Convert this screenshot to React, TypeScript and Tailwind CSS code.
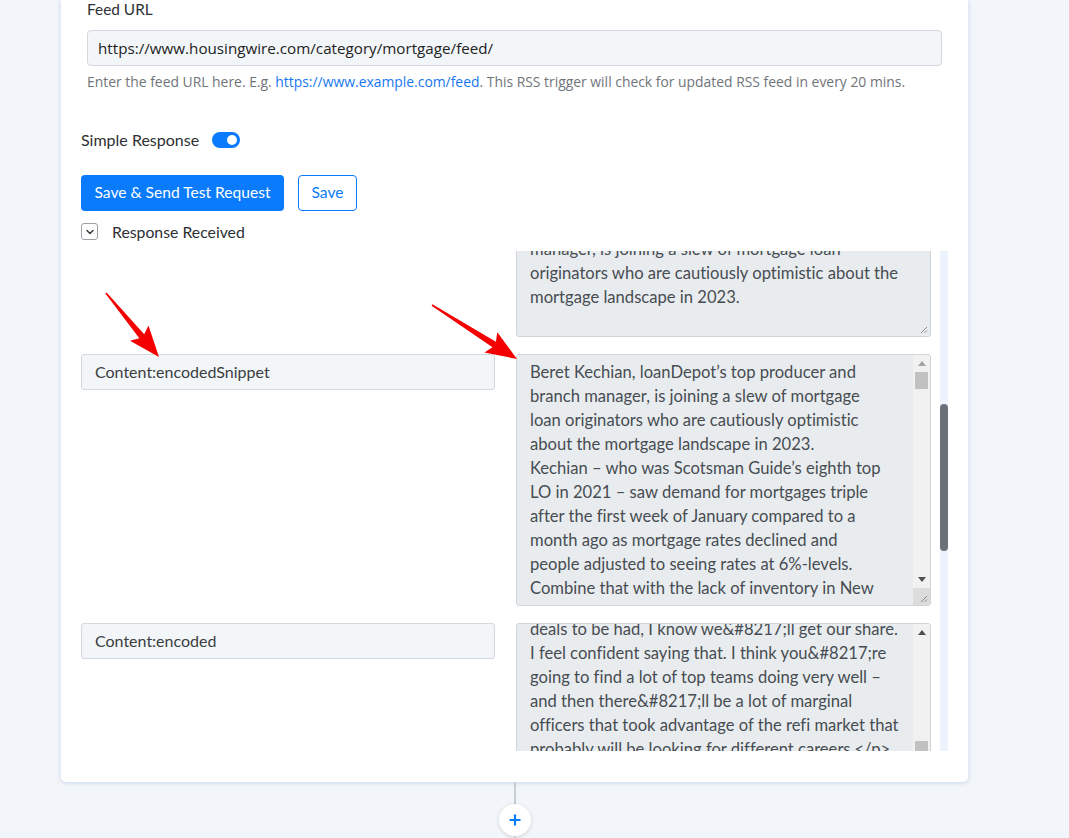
import React from 'react';
import { Plus, ChevronDown } from 'lucide-react';

const descriptionLines = [
  'Beret Kechian, loanDepot’s top producer and branch',
  'manager, is joining a slew of mortgage loan',
  'originators who are cautiously optimistic about the',
  'mortgage landscape in 2023.',
];

const snippetLines = [
  'Beret Kechian, loanDepot’s top producer and',
  'branch manager, is joining a slew of mortgage',
  'loan originators who are cautiously optimistic',
  'about the mortgage landscape in 2023.',
  'Kechian – who was Scotsman Guide’s eighth top',
  'LO in 2021 – saw demand for mortgages triple',
  'after the first week of January compared to a',
  'month ago as mortgage rates declined and',
  'people adjusted to seeing rates at 6%-levels.',
  'Combine that with the lack of inventory in New',
];

const encodedLines = [
  'deals to be had, I know we&#8217;ll get our share.',
  'I feel confident saying that. I think you&#8217;re',
  'going to find a lot of top teams doing very well –',
  'and then there&#8217;ll be a lot of marginal',
  'officers that took advantage of the refi market that',
  'probably will be looking for different careers.</p>',
];

type Bar = { thumbTop: number; thumbHeight: number; atTop?: boolean };

function Grip() {
  return (
    <svg width="10" height="10" viewBox="0 0 10 10" className="absolute bottom-[2px] right-[2px]">
      <path d="M9 3 L3 9 M9 6.5 L6.5 9" stroke="#8a8a8a" strokeWidth="1" />
    </svg>
  );
}

function Triangle({ up, color }: { up?: boolean; color: string }) {
  return (
    <svg width="8" height="5" viewBox="0 0 8 5">
      <path d={up ? 'M0 5 L4 0 L8 5 Z' : 'M0 0 L8 0 L4 5 Z'} fill={color} />
    </svg>
  );
}

function TextBox({
  lines,
  height,
  offset = 0,
  bar,
}: {
  lines: string[];
  height: number;
  offset?: number;
  bar?: Bar;
}) {
  return (
    <div
      className="relative flex overflow-hidden rounded-[3px] border border-[#cfd4da] bg-[#e9ecef]"
      style={{ height }}
    >
      <div className="flex-1 overflow-hidden pl-[13px] pr-2 pt-[5px]">
        <div style={{ marginTop: offset }}>
          {lines.map((line, i) => (
            <div
              key={i}
              className="h-6 whitespace-nowrap text-[16.6px] leading-6 text-[#474c52] [font-variant-ligatures:none]"
            >
              {line}
            </div>
          ))}
        </div>
      </div>
      {bar ? (
        <div className="flex w-[17px] shrink-0 flex-col bg-[#f1f1f1]">
          <div className="flex h-[17px] items-center justify-center">
            <Triangle up color={bar.atTop ? '#a3a3a3' : '#505050'} />
          </div>
          <div className="relative flex-1">
            <div
              className="absolute left-[2px] right-[2px] bg-[#c1c1c1]"
              style={{ top: bar.thumbTop, height: bar.thumbHeight }}
            />
          </div>
          <div className="flex h-[17px] items-center justify-center">
            <Triangle color="#505050" />
          </div>
          <div className="relative h-[17px] bg-[#dcdcdc]">
            <Grip />
          </div>
        </div>
      ) : (
        <Grip />
      )}
    </div>
  );
}

function FieldRow({
  label,
  children,
}: {
  label: string;
  children: React.ReactNode;
}) {
  return (
    <div className="flex gap-[21px]">
      <div className="w-[414px] shrink-0">
        <div className="flex h-9 items-center rounded-[3px] border border-[#d3d8de] bg-[#f3f6f9] px-[13px] text-[16px] text-[#3a3d40]">
          {label}
        </div>
      </div>
      <div className="flex-1">{children}</div>
    </div>
  );
}

// red callout arrow: thin tail widening into a barbed head
function arrowPoints(tx: number, ty: number, px: number, py: number) {
  const len = Math.hypot(px - tx, py - ty);
  const dx = (px - tx) / len;
  const dy = (py - ty) / len;
  const nx = -dy;
  const ny = dx;
  const bx = px - dx * 27;
  const by = py - dy * 27;
  const pt = (x: number, y: number) => `${x.toFixed(1)},${y.toFixed(1)}`;
  return [
    pt(tx + nx * 0.8, ty + ny * 0.8),
    pt(bx + nx * 3.2, by + ny * 3.2),
    pt(bx - dx * 4 + nx * 12, by - dy * 4 + ny * 12),
    pt(px, py),
    pt(bx - dx * 4 - nx * 12, by - dy * 4 - ny * 12),
    pt(bx - nx * 3.2, by - ny * 3.2),
    pt(tx - nx * 0.8, ty - ny * 0.8),
  ].join(' ');
}

export default function App() {
  return (
    <div className="relative h-[838px] overflow-hidden bg-[#f2f5f9] font-['Lato',sans-serif]">
      <div className="ml-[61px] w-[907px] rounded-b-[5px] bg-white px-5 pb-[31px] shadow-[0_1px_4px_rgba(70,110,200,0.22)]">
        <div className="px-1.5">
          <div className="h-[18px] text-[15.4px] leading-[18px] text-[#2d3033]">Feed URL</div>
          <div className="mt-3 flex h-9 items-center rounded-[4px] border border-[#d3d8de] bg-[#f3f6f9] px-[10px] font-['Open_Sans',sans-serif] text-[15.2px] text-[#222]">
            https://www.housingwire.com/category/mortgage/feed/
          </div>
          <div className="mt-[7px] h-[18px] whitespace-nowrap font-['Open_Sans',sans-serif] text-[13.9px] leading-[18px] text-[#6f7479]">
            Enter the feed URL here. E.g.{' '}
            <span className="text-[#1677f2]">https://www.example.com/feed</span>. This RSS trigger
            will check for updated RSS feed in every 20 mins.
          </div>
        </div>

        <div className="mt-[39px] flex h-5 items-center gap-[13px]">
          <span className="text-[16px] text-[#2d3033]">Simple Response</span>
          <span className="flex h-4 w-7 items-center justify-end rounded-full bg-[#0a7bfd] pr-[3px]">
            <span className="h-[10px] w-[10px] rounded-full bg-white" />
          </span>
        </div>

        <div className="mt-[25px] flex h-[36px] gap-[14px]">
          <button className="w-[203px] rounded-[4px] bg-[#0a7bfd] text-[15.6px] text-white">
            Save &amp; Send Test Request
          </button>
          <button className="w-[59px] rounded-[4px] border border-[#0a7bfd] bg-white text-[15.6px] text-[#0a7bfd]">
            Save
          </button>
        </div>

        <div className="mt-[12px] flex h-[17px] items-center gap-[14px]">
          <span className="flex h-[17px] w-[17px] items-center justify-center rounded-[3px] border border-[#9aa0a6]">
            <ChevronDown size={12} strokeWidth={3} color="#3a3d40" />
          </span>
          <span className="text-[15.8px] text-[#2d3033]">Response Received</span>
        </div>

        <div className="mt-[11px] flex h-[500px] gap-[9px]">
          <div className="flex-1 overflow-hidden">
            <div className="-mt-[44px] flex flex-col gap-[17px]">
              <FieldRow label="Content:encodedDescription">
                <TextBox lines={descriptionLines} height={130} />
              </FieldRow>
              <FieldRow label="Content:encodedSnippet">
                <TextBox lines={snippetLines} height={252} bar={{ thumbTop: 0, thumbHeight: 17, atTop: true }} />
              </FieldRow>
              <FieldRow label="Content:encoded">
                <TextBox lines={encodedLines} height={252} offset={-12} bar={{ thumbTop: 100, thumbHeight: 40 }} />
              </FieldRow>
            </div>
          </div>
          <div className="relative w-2 shrink-0 bg-[#edf3fd]">
            <div className="absolute left-0 top-[153px] h-[147px] w-2 rounded-full bg-[#6b7178]" />
          </div>
        </div>
      </div>

      <div className="flex flex-col items-center pl-[61px] pr-[101px]">
        <div className="h-[22px] w-[2px] bg-[#c9ced4]" />
        <div className="flex h-8 w-8 items-center justify-center rounded-full bg-white shadow-[0_1px_4px_rgba(0,0,0,0.15)]">
          <Plus size={16} strokeWidth={3.2} color="#0a7bfd" />
        </div>
        <div className="h-6 w-[2px] bg-[#c9ced4]" />
      </div>

      <svg className="pointer-events-none absolute inset-0" width="1069" height="838">
        <polygon points={arrowPoints(106, 293, 159, 357)} fill="#f40000" />
        <polygon points={arrowPoints(432, 305, 517, 359)} fill="#f40000" />
      </svg>
    </div>
  );
}
